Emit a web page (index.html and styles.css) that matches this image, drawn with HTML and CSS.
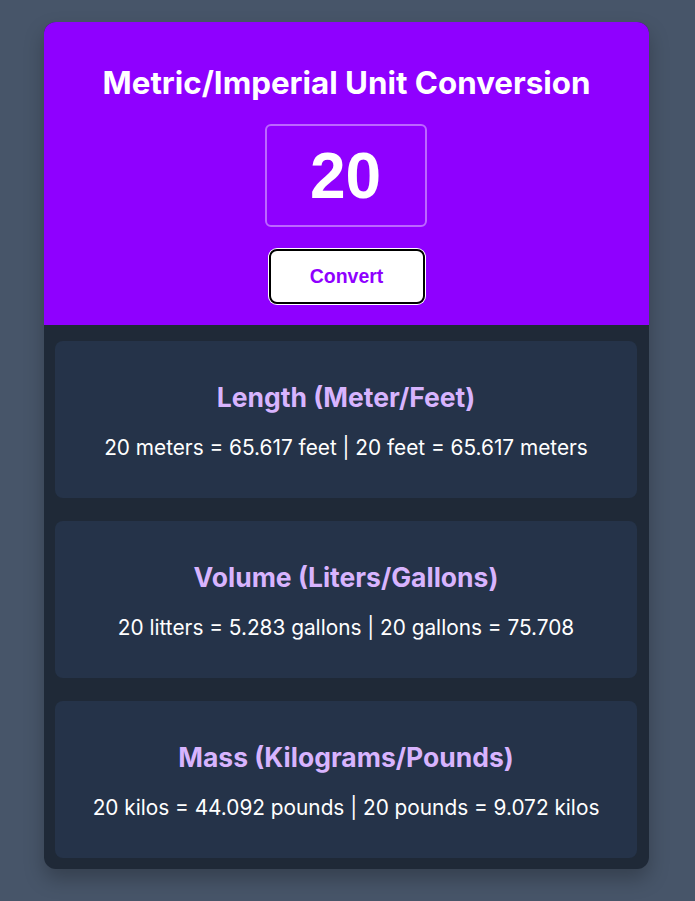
FILE: index.html
```html
<!DOCTYPE html>
<html lang="en">
<head>
<meta charset="utf-8">
<title>Unit Conversion</title>
<link rel="stylesheet" href="styles.css">
</head>
<body>
<main class="card">
  <section class="header">
    <h1 class="title">Metric/Imperial Unit Conversion</h1>
    <input class="amount" type="text" value="20">
    <button class="convert">Convert</button>
  </section>
  <section class="results">
    <div class="box">
      <h2 class="box-title">Length (Meter/Feet)</h2>
      <p class="box-text">20 meters = 65.617 feet | 20 feet = 65.617 meters</p>
    </div>
    <div class="box">
      <h2 class="box-title">Volume (Liters/Gallons)</h2>
      <p class="box-text">20 litters = 5.283 gallons | 20 gallons = 75.708</p>
    </div>
    <div class="box">
      <h2 class="box-title">Mass (Kilograms/Pounds)</h2>
      <p class="box-text">20 kilos = 44.092 pounds | 20 pounds = 9.072 kilos</p>
    </div>
  </section>
</main>
</body>
</html>
```
FILE: styles.css
```css
* { box-sizing: border-box; }
html, body { margin: 0; padding: 0; }
body {
  background: #475569;
  font-family: Inter, "Liberation Sans", sans-serif;
  min-height: 901px;
  padding-top: 22px;
}
.card {
  width: 605px;
  margin-left: 44px;
  border-radius: 12px;
  overflow: hidden;
  background: #1f2937;
  box-shadow: 0 10px 20px rgba(0,0,0,0.25);
}
.header {
  background: #8f00ff;
  height: 303px;
  display: flex;
  flex-direction: column;
  align-items: center;
  padding-top: 43px;
}
.title {
  margin: 0;
  color: #fff;
  font-size: 31.3px;
  font-weight: 700;
  line-height: 36px;
}
.amount {
  margin-top: 23px;
  margin-left: -2px;
  width: 162px;
  height: 103px;
  border: 2px solid rgba(255,255,255,0.4);
  border-radius: 6px;
  background: transparent;
  color: #fff;
  text-align: center;
  font-family: "Liberation Sans", Arial, sans-serif;
  font-weight: 700;
  font-size: 64px;
  outline: none;
  padding: 0;
}
.convert {
  margin-top: 22px;
  width: 156px;
  height: 55px;
  background: #fff;
  border: 2px solid #000;
  border-radius: 8px;
  box-shadow: 0 0 0 1px #fff;
  color: #8f00ff;
  font-family: "Liberation Sans", Arial, sans-serif;
  font-weight: 700;
  font-size: 19.5px;
  padding: 0;
}
.results {
  padding: 16px 12px 11px 11px;
  display: flex;
  flex-direction: column;
  gap: 23px;
}
.box {
  background: #253349;
  border-radius: 8px;
  height: 157px;
  display: flex;
  flex-direction: column;
  align-items: center;
  padding-top: 39px;
}
.box-title {
  margin: 0;
  color: #d8b4fe;
  font-size: 26.5px;
  font-weight: 700;
  line-height: 34px;
}
.box-text {
  margin: 20px 0 0;
  color: #fff;
  font-size: 20.8px;
  line-height: 28px;
}
```
